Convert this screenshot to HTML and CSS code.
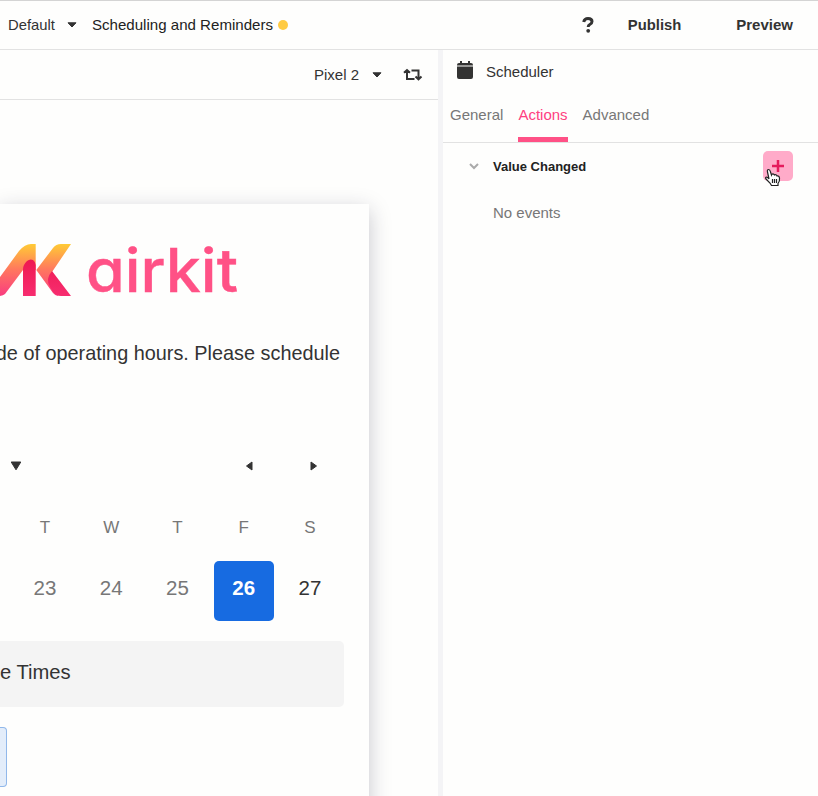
FILE: index.html
```
<!DOCTYPE html>
<html lang="en">
<head>
<meta charset="utf-8">
<title>Scheduling and Reminders</title>
<link rel="stylesheet" href="styles.css">
</head>
<body>
<header class="topbar">
  <span class="label default">Default</span>
  <svg class="caret" width="10" height="6" viewBox="0 0 10 6"><path d="M1 .8h8L5 5z"/></svg>
  <svg class="title" width="182" height="24"><text x="0" y="16.500" textLength="181" lengthAdjust="spacingAndGlyphs">Scheduling and Reminders</text></svg>
  <i class="dot"></i>
  <nav>
    <svg class="help" width="12" height="16" viewBox="0 0 12 16"><path d="M1.700 5Q2.500 1.500 6 1.500Q10 1.500 10 4.500Q10 6.400 7.800 7.500Q6.200 8.300 6.200 10"/><circle cx="6.200" cy="13.800" r="1.900"/></svg>
    <b class="publish">Publish</b><b class="preview">Preview</b>
  </nav>
</header>
<main>
  <section class="workspace">
    <div class="device-bar">
      <span>Pixel 2</span>
      <svg class="caret" width="10" height="6" viewBox="0 0 10 6"><path d="M1 .8h8L5 5z"/></svg>
      <svg class="rotate" width="20" height="14" viewBox="0 0 20 14"><path d="M1 4.800L4 2L7 4.800M4 2.500V11H11.500M8.500 2.500H15.500V11M12.500 8.500L15.500 11.300L18.500 8.500"/></svg>
    </div>
    <div class="canvas">
      <article class="phone">
        <svg class="logo" width="245" height="60" viewBox="0 0 245 60">
          <defs>
            <linearGradient id="warm" gradientUnits="userSpaceOnUse" x1="0" y1="4" x2="0" y2="56"><stop stop-color="#ffcb35"/><stop offset=".5" stop-color="#ff765f"/><stop offset="1" stop-color="#f93c80"/></linearGradient>
            <linearGradient id="red" x1="0" y1="0" x2="0" y2="1"><stop stop-color="#ee1950"/><stop offset="1" stop-color="#f72d70"/></linearGradient>
          </defs>
          <path fill="url(#warm)" d="M-14 56L19 11Q25 4 31 4H35.700V30H23L5 54Q3 56 -1 56ZM36.300 30L53 8Q56 4 61 4H71L52 32L58 56Q55 55.500 53 53Z"/>
          <path fill="url(#red)" d="M23 56V29Q23 25 27 21Q30 18.500 33 20Q35.700 22 35.700 25V56ZM52 31L71 56H61Q56 56 53 52L50 47Q45 39 52 31Z"/>
          <text class="wordmark" x="86" y="51.500" textLength="152" lengthAdjust="spacingAndGlyphs">airkit</text>
        </svg>
        <p class="intro"><span>de of operating hours. Please schedule</span></p>
        <div class="month">
          <svg width="12" height="10" viewBox="0 0 12 10"><path d="M1.200 1h9.600L6 8.800z"/></svg>
          <svg class="prev" width="8" height="10" viewBox="0 0 8 10"><path d="M7 1v8L1.500 5z"/></svg>
          <svg class="next" width="8" height="10" viewBox="0 0 8 10"><path d="M1 1v8L6.500 5z"/></svg>
        </div>
        <div class="week days"><span>T</span><span>W</span><span>T</span><span>F</span><span>S</span></div>
        <div class="week dates"><span>23</span><span>24</span><span>25</span><b>26</b><span class="open">27</span></div>
        <div class="times">e Times</div>
        <div class="slot"></div>
      </article>
    </div>
  </section>
  <aside class="inspector">
    <div class="name">
      <svg width="16" height="18" viewBox="0 0 16 18"><path d="M3 0h2v2h6V0h2v2h1q2 0 2 2v.500H0V4q0-2 2-2h1zM0 5.500h16V16q0 2-2 2H2q-2 0-2-2z"/></svg>
      <span>Scheduler</span>
    </div>
    <div class="tabs"><span>General</span><span class="active">Actions</span><span>Advanced</span></div>
    <div class="event">
      <svg class="chevron" width="10" height="7" viewBox="0 0 10 7"><path d="M1 1l4 4 4-4"/></svg>
      <b>Value Changed</b>
      <div class="add">
        <svg width="14" height="14" viewBox="0 0 14 14"><path d="M7 1v12M1 7h12"/></svg>
        <svg class="cursor" width="18" height="19" viewBox="0 0 18 19"><path d="M5 11L3.500 4Q3 1.500 4.500 1.500Q6 1.500 6.500 4L7.500 7Q8 5.500 9.500 6L10.500 7Q12 6 13 8Q15 7.500 15.500 10Q16 13 14 15.500V17.500H7.500L6 15L2 11Q1 9.500 2.300 9Q3.500 9 5 11Z"/><path d="M8.500 11v4M10.500 11v4M12.500 11v4"/></svg>
      </div>
    </div>
    <p class="empty">No events</p>
  </aside>
</main>
</body>
</html>
```
FILE: styles.css
```
* { box-sizing: border-box; }
body { margin: 0; height: 796px; overflow: hidden; background: #fefefd; color: #333; font: 15px/24px "Liberation Sans", Arial, sans-serif; display: flex; flex-direction: column; }
svg { display: block; flex: none; }
.topbar { height: 50px; flex: none; border-top: 1px solid #d4d4d4; border-bottom: 1px solid #e2e2e2; display: flex; align-items: center; padding-left: 8px; }
.caret { fill: #333; stroke: #333; stroke-width: 1; stroke-linejoin: round; }
.default { width: 59px; font-size: 14.800px; }
.title { margin-left: 15px; fill: #222; }
.dot { width: 10px; height: 10px; border-radius: 50%; background: #ffcb43; margin-left: 4px; }
nav { margin-left: auto; display: flex; align-items: center; padding-right: 25px; }
.help { fill: none; stroke: #333; stroke-width: 3; margin-right: 34px; }
.help circle { fill: #333; stroke: none; }
.publish { font-size: 14.800px; }
.preview { margin-left: 55px; }
main { flex: 1; display: flex; min-height: 0; }
.workspace { width: 443px; border-right: 5px solid #f4f4f6; display: flex; flex-direction: column; }
.device-bar { height: 50px; flex: none; border-bottom: 1px solid #e2e2e2; display: flex; align-items: center; padding-left: 314px; }
.device-bar span { width: 58px; }
.rotate { margin-left: 21px; fill: none; stroke: #333; stroke-width: 2; }
.canvas { flex: 1; overflow: hidden; padding-top: 104px; }
.phone { width: 369px; height: 620px; padding-top: 36px; box-shadow: 0 6px 20px rgba(30,30,60,.25); background: #fefefd; }
.logo { overflow: visible; }
.wordmark { font: 500 60px/60px Inter, sans-serif; font-feature-settings: "cv11"; fill: #ff5186; stroke: #ff5186; stroke-width: .4; }
.intro { margin: 41px 0 0; font-size: 19.850px; white-space: nowrap; width: 340px; display: flex; justify-content: flex-end; }
.month { display: flex; margin-top: 96px; padding-left: 10px; fill: #333; }
.month svg { stroke: #333; stroke-linejoin: round; }
.month .prev { margin-left: 223px; }
.month .next { margin-left: 57px; }
.week { display: grid; grid-template-columns: repeat(5, 60px); column-gap: 6.250px; padding-left: 15px; text-align: center; color: #777; }
.days { margin-top: 45px; font-size: 17px; }
.dates { margin-top: 21px; line-height: 54px; font-size: 20.500px; }
.dates b { background: #176be1; color: #fff; border-radius: 5px; height: 60px; }
.dates .open { color: #333; }
.times { width: 344px; height: 66px; margin-top: 20px; padding-top: 19px; background: #f4f4f4; border-radius: 0 5px 5px 0; font-size: 20.200px; }
.slot { width: 7px; height: 60px; margin-top: 20px; border: 1px solid #91b8ea; border-left: 0; border-radius: 0 4px 4px 0; background: #e3edfa; }
.inspector { flex: 1; }
.name { display: flex; align-items: center; padding: 10px 0 0 14px; gap: 13px; }
.name svg { fill: #333; margin-top: -4px; }
.tabs { height: 59px; border-bottom: 1px solid #e2e2e2; display: flex; padding: 19px 0 0 7px; gap: 15px; color: #777; }
.tabs .active { color: #ff4081; border-bottom: 5px solid #ff5186; }
.event { display: flex; align-items: center; height: 47px; padding: 0 25px 0 26px; color: #222; font-size: 13px; }
.chevron { stroke: #aaa; stroke-width: 2; fill: none; margin-right: 14px; }
.add { margin: -1px 0 0 auto; width: 30px; height: 30px; border-radius: 5px; background: #ffabc9; position: relative; display: grid; place-items: center; }
.add svg { stroke: #e51b5d; stroke-width: 2.500; fill: none; }
.add .cursor { position: absolute; left: 1px; top: 17px; fill: #fff; stroke: #222; stroke-width: 1.200; }
.empty { margin: 11px 0 0 50px; color: #777; }
```
